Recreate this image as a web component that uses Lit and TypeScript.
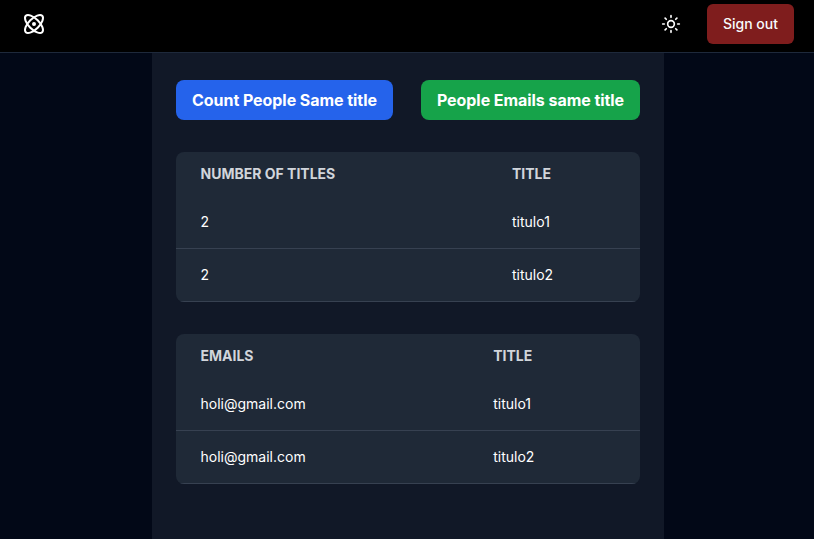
import { LitElement, html, css } from "lit";
import { customElement, property } from "lit/decorators.js";

@customElement("data-table")
class DataTable extends LitElement {
  @property({ attribute: false }) heads: string[] = [];
  @property({ attribute: false }) rows: string[][] = [];
  @property({ type: Number }) first = 312;

  static styles = css`
    :host { display: block; border-radius: 8px; overflow: hidden; background: #1f2937; }
    .row { display: grid; height: 52px; align-items: center; border-bottom: 1px solid #374151; color: #fff; font-size: 14px; line-height: 20px; }
    .head { height: 44px; border: 0; color: #d1d5db; font-weight: 700; text-transform: uppercase; }
    .cell { padding-left: 24.5px; }
  `;

  render() {
    const cols = `grid-template-columns:${this.first}px 1fr`;
    return html`
      <div class="row head" style=${cols}>${this.heads.map((h) => html`<div class="cell">${h}</div>`)}</div>
      ${this.rows.map((r) => html`<div class="row" style=${cols}>${r.map((c) => html`<div class="cell">${c}</div>`)}</div>`)}
    `;
  }
}

@customElement("app-root")
class AppRoot extends LitElement {
  static styles = css`
    :host { display: flex; flex-direction: column; height: 100vh; overflow: hidden; background: #020817; font-family: Inter, sans-serif; }
    * { box-sizing: border-box; }
    .bar { display: flex; align-items: center; height: 53px; flex: none; padding: 0 20px 4px 22px; background: #000; border-bottom: 1px solid #1e293b; }
    .logo { display: block; width: 24px; height: 24px; color: #fff; }
    .sun { display: block; width: 20px; height: 20px; margin-left: auto; color: #fff; }
    .out { margin-left: 26px; width: 87px; height: 40px; border: 0; border-radius: 6px; padding: 0; background: #7f1d1d; color: #f8fafc; font: 500 14px/20px Inter, sans-serif; }
    .main { flex: 1; width: 512px; margin: 0 150px 0 152px; padding: 27px 24px; background: #111827; }
    .actions { display: flex; justify-content: space-between; margin-bottom: 32px; }
    .btn { height: 40px; padding: 0; border: 0; border-radius: 8px; color: #fff; font: 700 16px/24px Inter, sans-serif; letter-spacing: -0.055px; white-space: nowrap; }
    .blue { width: 217px; background: #2563eb; }
    .green { width: 219px; background: #16a34a; }
    data-table { margin-bottom: 32px; }
  `;

  render() {
    return html`
      <header class="bar">
        <svg class="logo" viewBox="0 0 24 24" fill="none" stroke="currentColor" stroke-width="2" stroke-linecap="round" stroke-linejoin="round">
          <circle cx="12" cy="12" r="1" />
          <path d="M20.2 20.2c2.04-2.03.02-7.36-4.5-11.9-4.54-4.52-9.87-6.54-11.9-4.5-2.04 2.03-.02 7.36 4.5 11.9 4.54 4.52 9.87 6.54 11.9 4.5Z" />
          <path d="M15.7 15.7c4.52-4.54 6.54-9.87 4.5-11.9-2.03-2.04-7.36-.02-11.9 4.5-4.52 4.54-6.54 9.87-4.5 11.9 2.03 2.04 7.36.02 11.9-4.5Z" />
        </svg>
        <svg class="sun" viewBox="0 0 24 24" fill="none" stroke="currentColor" stroke-width="2" stroke-linecap="round">
          <circle cx="12" cy="12" r="4" />
          <path d="M12 2v2M12 20v2M4.93 4.93l1.41 1.41M17.66 17.66l1.41 1.41M2 12h2M20 12h2M6.34 17.66l-1.41 1.41M19.07 4.93l-1.41 1.41" />
        </svg>
        <button class="out">Sign out</button>
      </header>
      <main class="main">
        <div class="actions">
          <button class="btn blue">Count People Same title</button>
          <button class="btn green">People Emails same title</button>
        </div>
        <data-table .first=${311.5} .heads=${["Number of titles", "Title"]} .rows=${[["2", "titulo1"], ["2", "titulo2"]]}></data-table>
        <data-table .first=${292.7} .heads=${["Emails", "Title"]} .rows=${[["holi@gmail.com", "titulo1"], ["holi@gmail.com", "titulo2"]]}></data-table>
      </main>
    `;
  }
}
